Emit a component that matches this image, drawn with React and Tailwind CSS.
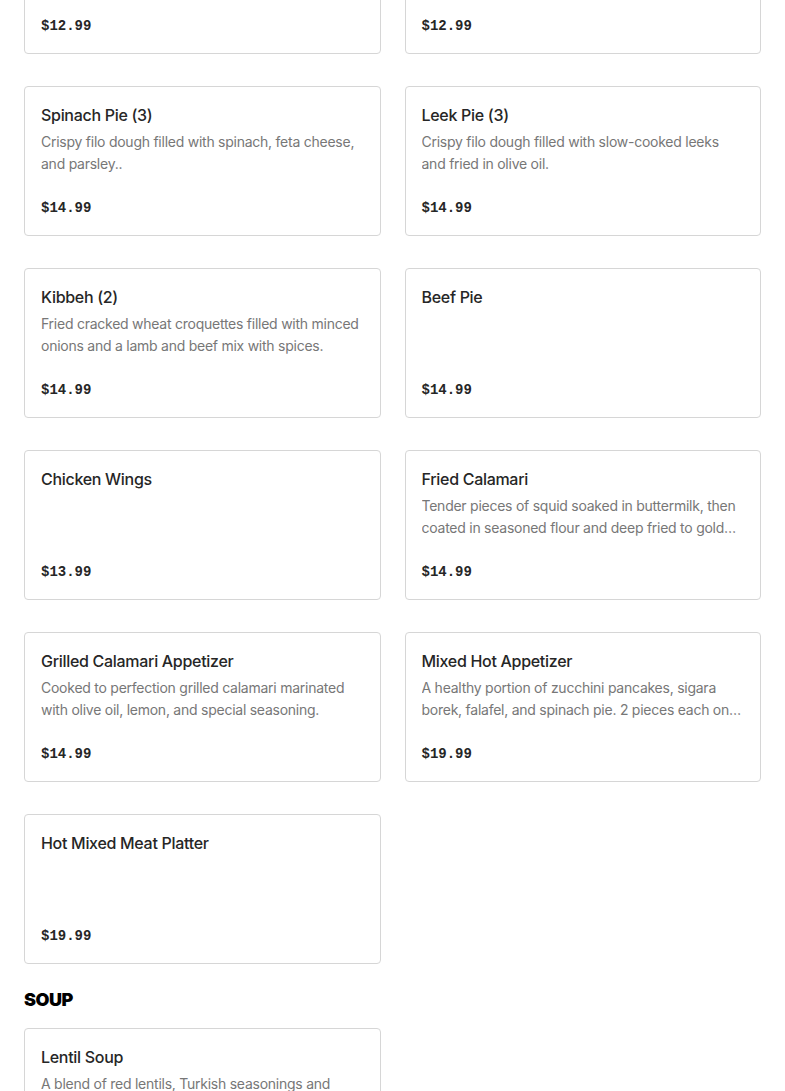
const ITEMS = [
  { name: 'Zucchini Pancakes', desc: 'Fresh zucchini, herbs and feta cheese pan fried.', price: '$12.99' },
  { name: 'Sigara Borek', desc: 'Crispy filo dough rolls filled with feta cheese and parsley.', price: '$12.99' },
  { name: 'Spinach Pie (3)', desc: 'Crispy filo dough filled with spinach, feta cheese, and parsley..', price: '$14.99' },
  { name: 'Leek Pie (3)', desc: 'Crispy filo dough filled with slow-cooked leeks and fried in olive oil.', price: '$14.99' },
  { name: 'Kibbeh (2)', desc: 'Fried cracked wheat croquettes filled with minced onions and a lamb and beef mix with spices.', price: '$14.99' },
  { name: 'Beef Pie', desc: '', price: '$14.99' },
  { name: 'Chicken Wings', desc: '', price: '$13.99' },
  { name: 'Fried Calamari', desc: 'Tender pieces of squid soaked in buttermilk, then coated in seasoned flour and deep fried to golden perfection.', price: '$14.99' },
  { name: 'Grilled Calamari Appetizer', desc: 'Cooked to perfection grilled calamari marinated with olive oil, lemon, and special seasoning.', price: '$14.99' },
  { name: 'Mixed Hot Appetizer', desc: 'A healthy portion of zucchini pancakes, sigara borek, falafel, and spinach pie. 2 pieces each on a platter.', price: '$19.99' },
  { name: 'Hot Mixed Meat Platter', desc: '', price: '$19.99' },
]

const SOUP = [
  { name: 'Lentil Soup', desc: 'A blend of red lentils, Turkish seasonings and vegetables, cooked fresh daily.', price: '$7.99' },
]

function ItemCard({ item }) {
  return (
    <div className="flex flex-col border border-[#d6d6d6] rounded-[4px] bg-white px-4 pt-4 pb-4 h-[150px]">
      <h3 className="text-[16px] leading-6 font-medium tracking-[-0.3px] text-[#262626] truncate">{item.name}</h3>
      <p className="mt-[4px] h-[44px] text-[14px] leading-[22px] tracking-[-0.25px] text-[#777777] line-clamp-2">{item.desc}</p>
      <p className="mt-auto text-[14px] leading-[22px] font-bold text-[#262626]" style={{ fontFamily: '"Liberation Mono", monospace' }}>
        {item.price}
      </p>
    </div>
  )
}

export default function App() {
  return (
    <div className="min-h-screen bg-white px-6" style={{ fontFamily: 'Inter, "Liberation Sans", sans-serif' }}>
      {/* Appetizers (scrolled) */}
      <div className="grid grid-cols-2 gap-x-6 gap-y-8 -mt-[96px]">
        {ITEMS.map(item => <ItemCard key={item.name} item={item} />)}
      </div>

      {/* Soup */}
      <h2 className="mt-[25px] mb-[17px] text-[18px] leading-[22px] font-black tracking-tight text-black">SOUP</h2>
      <div className="grid grid-cols-2 gap-x-6 gap-y-8">
        {SOUP.map(item => <ItemCard key={item.name} item={item} />)}
      </div>
    </div>
  )
}
